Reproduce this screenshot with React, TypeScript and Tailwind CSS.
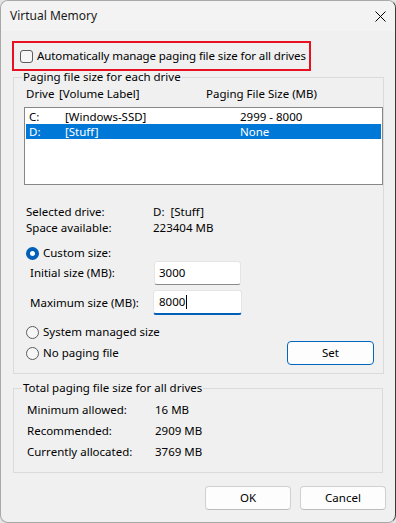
import React from "react"

const DRIVES = [
  { letter: "C:", label: "[Windows-SSD]", size: "2999 - 8000", selected: false },
  { letter: "D:", label: "[Stuff]", size: "None", selected: true },
]

const TOTALS = [
  { k: "Minimum allowed:", v: "16 MB" },
  { k: "Recommended:", v: "2909 MB" },
  { k: "Currently allocated:", v: "3769 MB" },
]

function Radio({ checked }: { checked?: boolean }) {
  if (checked) {
    return (
      <span className="flex h-[13px] w-[13px] shrink-0 items-center justify-center rounded-full bg-[#005fb8]">
        <span className="h-[5px] w-[5px] rounded-full bg-white" />
      </span>
    )
  }
  return <span className="h-[13px] w-[13px] shrink-0 rounded-full border border-[#5c5c5c] bg-[#f6f6f6]" />
}

function Button({ children, primary }: { children: React.ReactNode; primary?: boolean }) {
  return (
    <button
      className={
        primary
          ? "flex h-[24px] w-[87px] items-center justify-center rounded-[4px] border-[1.5px] border-[#0067c0] bg-[#fdfdfd]"
          : "flex h-[24px] w-[86px] items-center justify-center rounded-[4px] border border-[#d0d0d0] border-b-[#bcbcbc] bg-[#fdfdfd]"
      }
    >
      {children}
    </button>
  )
}

export default function App() {
  return (
    <div className="flex h-[523px] w-[396px] bg-[#e4e4e4] font-['Noto_Sans',sans-serif] text-[11.5px] leading-[16px] text-black">
      <div className="flex h-full w-[396px] flex-col overflow-hidden rounded-[8px] border border-[#a8a8a8] border-r-[#3a3a3a] bg-[#f0f0f0]">
        {/* title bar */}
        <div className="flex h-[30px] shrink-0 items-center justify-between bg-[#f3f3f3] pl-[9px] pr-[9px]">
          <span className="text-[12px] text-[#1a1a1a]">Virtual Memory</span>
          <svg width="11" height="11" viewBox="0 0 11 11" className="text-black">
            <path d="M0.5 0.5 L10.5 10.5 M10.5 0.5 L0.5 10.5" stroke="currentColor" strokeWidth="1" />
          </svg>
        </div>

        {/* auto manage, highlighted */}
        <div className="ml-[11px] mt-[10px] flex h-[30px] w-[299px] items-center border-2 border-[#e81123] pl-[6px]">
          <span className="h-[13px] w-[13px] shrink-0 rounded-[3px] border border-[#5c5c5c] bg-[#f6f6f6]" />
          <span className="ml-[4px] whitespace-nowrap tracking-[-0.1px]">Automatically manage paging file size for all drives</span>
        </div>

        {/* paging file per drive */}
        <fieldset className="ml-[12px] mt-[-2px] w-[370px] border border-[#dadada] pb-[8px]">
          <legend className="ml-[8px] px-[1px]">Paging file size for each drive</legend>
          <div className="ml-[12px] mt-[1px] flex">
            <span className="w-[33px]">Drive</span>
            <span className="w-[147px]">[Volume Label]</span>
            <span>Paging File Size (MB)</span>
          </div>
          <div className="ml-[10px] mt-[5px] h-[78px] w-[359px] border border-[#878787] bg-white p-[1px]">
            {DRIVES.map((d) => (
              <div
                key={d.letter}
                className={`flex h-[15px] items-center overflow-hidden pl-[3px] leading-[15px] ${d.selected ? "bg-[#0078d7] text-white" : ""}`}
              >
                <span className="w-[36px]">{d.letter}</span>
                <span className="w-[175px]">{d.label}</span>
                <span>{d.size}</span>
              </div>
            ))}
          </div>

          <div className="ml-[12px] mt-[19px] flex">
            <span className="w-[127px]">Selected drive:</span>
            <span>D:&nbsp; [Stuff]</span>
          </div>
          <div className="ml-[12px] flex">
            <span className="w-[127px]">Space available:</span>
            <span>223404 MB</span>
          </div>

          <div className="ml-[12px] mt-[9px] flex items-center gap-[4px]">
            <Radio checked />
            <span>Custom size:</span>
          </div>
          <div className="ml-[16px] flex h-[24px] items-center">
            <span className="w-[124px]">Initial size (MB):</span>
            <div className="flex h-[24px] w-[87px] items-center rounded-[3px] border border-[#e5e5e5] border-b-[#8a8a8a] bg-white pl-[4px]">
              3000
            </div>
          </div>
          <div className="ml-[16px] mt-[5px] flex h-[25px] items-center">
            <span className="w-[123px]">Maximum size (MB):</span>
            <div className="flex h-[25px] w-[89px] items-center rounded-[3px] border border-[#e5e5e5] border-b-2 border-b-[#005fb8] bg-white pl-[5px]">
              8000
              <span className="ml-[1px] h-[14px] w-[1px] bg-black" />
            </div>
          </div>

          <div className="ml-[12px] mt-[9px] flex items-center gap-[4px]">
            <Radio />
            <span>System managed size</span>
          </div>
          <div className="ml-[12px] mr-[9px] mt-[1px] flex h-[24px] items-center">
            <Radio />
            <span className="ml-[4px]">No paging file</span>
            <div className="ml-auto">
              <Button primary>Set</Button>
            </div>
          </div>
        </fieldset>

        {/* totals */}
        <fieldset className="ml-[12px] mt-[6px] w-[370px] border border-[#dadada] pb-[12px]">
          <legend className="ml-[8px] px-[1px]">Total paging file size for all drives</legend>
          <div className="ml-[13px] mt-[6px] flex flex-col gap-[5px]">
            {TOTALS.map((t) => (
              <div key={t.k} className="flex">
                <span className="w-[128px]">{t.k}</span>
                <span>{t.v}</span>
              </div>
            ))}
          </div>
        </fieldset>

        <div className="mr-[9px] mt-[13px] flex justify-end gap-[9px]">
          <Button>OK</Button>
          <Button>Cancel</Button>
        </div>
      </div>
    </div>
  )
}
